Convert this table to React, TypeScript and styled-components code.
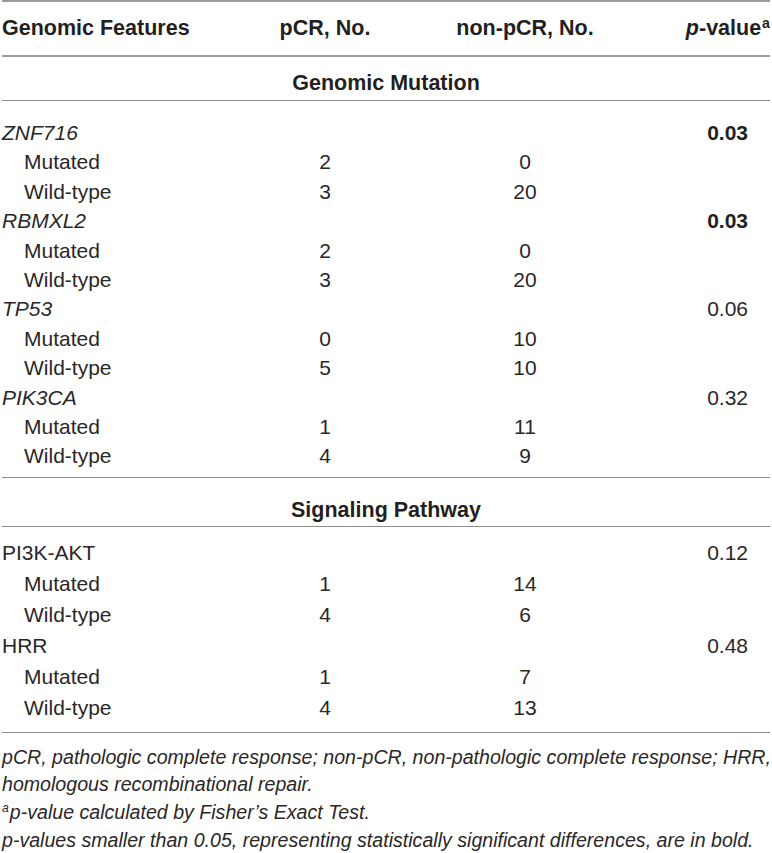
import styled, { createGlobalStyle } from "styled-components"

const GlobalStyle = createGlobalStyle`
  html, body {
    margin: 0;
    padding: 0;
    background: #ffffff;
  }
  body {
    font-family: "Liberation Sans", Arial, Helvetica, sans-serif;
    color: #231f20;
  }
`

type Feature = {
  name: string
  italic: boolean
  p: string
  significant?: boolean
  rows: [string, string, string][]
}

type Section = {
  title: string
  titleTop: number
  titleBottom: number
  pitch: number
  padTop: number
  padBottom: number
  features: Feature[]
}

const mutatedWild = (a: string, b: string, c: string, d: string): [string, string, string][] => [
  ["Mutated", a, b],
  ["Wild-type", c, d],
]

const sections: Section[] = [
  {
    title: "Genomic Mutation",
    titleTop: 12,
    titleBottom: 1.6,
    pitch: 29.4,
    padTop: 17,
    padBottom: 6,
    features: [
      { name: "ZNF716", italic: true, p: "0.03", significant: true, rows: mutatedWild("2", "0", "3", "20") },
      { name: "RBMXL2", italic: true, p: "0.03", significant: true, rows: mutatedWild("2", "0", "3", "20") },
      { name: "TP53", italic: true, p: "0.06", rows: mutatedWild("0", "10", "5", "10") },
      { name: "PIK3CA", italic: true, p: "0.32", rows: mutatedWild("1", "11", "4", "9") },
    ],
  },
  {
    title: "Signaling Pathway",
    titleTop: 18,
    titleBottom: 1,
    pitch: 31,
    padTop: 10,
    padBottom: 8.8,
    features: [
      { name: "PI3K-AKT", italic: false, p: "0.12", rows: mutatedWild("1", "14", "4", "6") },
      { name: "HRR", italic: false, p: "0.48", rows: mutatedWild("1", "7", "4", "13") },
    ],
  },
]

const Table = styled.div`
  width: 772px;
  box-sizing: border-box;
  padding: 0 2px;
`

const Row = styled.div<{ $pitch: number }>`
  display: grid;
  grid-template-columns: 223px 200px 200px 1fr;
  line-height: ${(p) => p.$pitch}px;
  font-size: 21px;
  color: #2a2728;
`

const HeaderRow = styled(Row)`
  border-top: 2px solid #9b9b9b;
  border-bottom: 2px solid #9b9b9b;
  padding: 12px 0 11.6px;
  font-size: 21.5px;
  font-weight: 700;
  color: #231f20;
`

const HeadCell = styled.div<{ $align: "left" | "center" | "right" }>`
  text-align: ${(p) => p.$align};
  white-space: nowrap;
`

const Sup = styled.sup`
  font-size: 0.66em;
  line-height: 0;
  vertical-align: 0.5em;
  margin-left: 1px;
`

const SectionTitle = styled.div<{ $top: number; $bottom: number }>`
  text-align: center;
  font-size: 21.5px;
  font-weight: 700;
  line-height: 29.4px;
  padding: ${(p) => p.$top}px 0 ${(p) => p.$bottom}px;
  border-bottom: 1px solid #8e8e8e;
`

const Group = styled.div<{ $top: number; $bottom: number }>`
  padding: ${(p) => p.$top}px 0 ${(p) => p.$bottom}px;
  border-bottom: 1px solid #8e8e8e;
`

const Label = styled.div<{ $indent?: boolean; $italic?: boolean }>`
  padding-left: ${(p) => (p.$indent ? 22 : 0)}px;
  font-style: ${(p) => (p.$italic ? "italic" : "normal")};
  white-space: nowrap;
`

const Num = styled.div`
  text-align: center;
`

const PValue = styled.div<{ $bold?: boolean }>`
  text-align: right;
  padding-right: 22px;
  font-weight: ${(p) => (p.$bold ? 700 : 400)};
  color: ${(p) => (p.$bold ? "#231f20" : "inherit")};
`

const Notes = styled.div`
  padding-top: 10.5px;
  font-size: 19.6px;
  line-height: 27.7px;
  font-style: italic;
  letter-spacing: 0;
  white-space: nowrap;
  color: #2a2728;
`

const NoteSup = styled.sup`
  font-size: 0.62em;
  line-height: 0;
  vertical-align: 0.55em;
  margin-right: 1px;
`

function FeatureRows(props: { feature: Feature; pitch: number }) {
  const { feature, pitch } = props
  return (
    <>
      <Row $pitch={pitch}>
        <Label $italic={feature.italic}>{feature.name}</Label>
        <Num />
        <Num />
        <PValue $bold={feature.significant}>{feature.p}</PValue>
      </Row>
      {feature.rows.map(([label, pcr, nonPcr]) => (
        <Row $pitch={pitch} key={label}>
          <Label $indent>{label}</Label>
          <Num>{pcr}</Num>
          <Num>{nonPcr}</Num>
          <PValue />
        </Row>
      ))}
    </>
  )
}

export default function App() {
  return (
    <>
      <GlobalStyle />
      <Table>
        <HeaderRow $pitch={29.4}>
          <HeadCell $align="left">Genomic Features</HeadCell>
          <HeadCell $align="center">pCR, No.</HeadCell>
          <HeadCell $align="center">non-pCR, No.</HeadCell>
          <HeadCell $align="right">
            <i>p</i>-value<Sup>a</Sup>
          </HeadCell>
        </HeaderRow>
        {sections.map((section) => (
          <div key={section.title}>
            <SectionTitle $top={section.titleTop} $bottom={section.titleBottom}>
              {section.title}
            </SectionTitle>
            <Group $top={section.padTop} $bottom={section.padBottom}>
              {section.features.map((feature) => (
                <FeatureRows key={feature.name} feature={feature} pitch={section.pitch} />
              ))}
            </Group>
          </div>
        ))}
        <Notes>
          pCR, pathologic complete response; non-pCR, non-pathologic complete response; HRR,
          <br />
          homologous recombinational repair.
          <br />
          <NoteSup>a</NoteSup>p-value calculated by Fisher’s Exact Test.
          <br />
          p-values smaller than 0.05, representing statistically significant differences, are in bold.
        </Notes>
      </Table>
    </>
  )
}
